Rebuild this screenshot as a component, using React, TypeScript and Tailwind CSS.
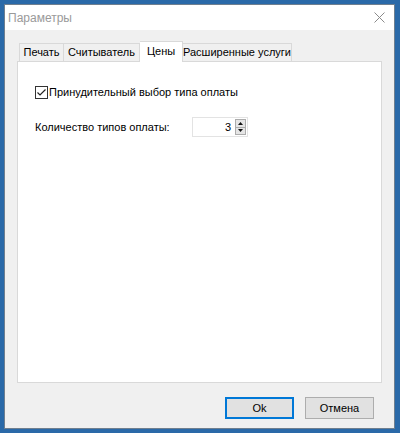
import React from "react";

const font = { fontFamily: '"Liberation Sans", Arial, sans-serif' };

export default function App() {
  return (
    <div className="w-[400px] h-[433px] bg-[#2a69a8] pt-[4px] pl-[4px] overflow-hidden" style={font}>
      <div className="w-[391px] h-[425px] border border-[#6f7f8f] flex flex-col bg-[#f0f0f0]">
        {/* Title bar */}
        <div className="h-[25px] bg-white flex items-center justify-between pl-[3px] pr-[9px] shrink-0">
          <span className="text-[12px] text-[#9a9a9a]">Параметры</span>
          <svg width="11" height="11" viewBox="0 0 11 11">
            <path d="M0.5 0.5 L10.5 10.5 M10.5 0.5 L0.5 10.5" stroke="#8a8a8a" strokeWidth="1" />
          </svg>
        </div>
        {/* Body */}
        <div className="flex-1 flex flex-col px-[12px] pt-[11px] pb-[8px] text-[11px] text-black">
          {/* Tabs */}
          <div className="h-[20px] flex items-end pl-[2px] relative z-10">
            <div className="w-[45px] h-[18px] border border-b-0 border-[#d9d9d9] bg-[#f0f0f0] flex items-center justify-center leading-none">Печать</div>
            <div className="w-[76px] h-[18px] border border-b-0 border-l-0 border-[#d9d9d9] bg-[#f0f0f0] flex items-center justify-center leading-none">Считыватель</div>
            <div className="w-[43px] h-[21px] border border-b-0 border-l-0 border-[#d9d9d9] bg-white flex items-start justify-center pt-[4px] leading-none mb-[-1px]">Цены</div>
            <div className="w-[109px] h-[18px] border border-b-0 border-l-0 border-[#d9d9d9] bg-[#f0f0f0] flex items-center justify-center leading-none">Расширенные услуги</div>
          </div>
          {/* Panel */}
          <div className="h-[322px] border border-[#d9d9d9] bg-white pl-[17px] pt-[24px] flex flex-col">
            <div className="flex items-center h-[13px]">
              <div className="w-[13px] h-[13px] border border-[#333333] bg-white flex items-center justify-center">
                <svg width="11" height="11" viewBox="0 0 11 11">
                  <path d="M1.5 5.5 L4 8 L9.5 2.5" stroke="#222" strokeWidth="1.2" fill="none" />
                </svg>
              </div>
              <span className="ml-[1px] leading-none">Принудительный выбор типа оплаты</span>
            </div>
            <div className="flex items-center mt-[18px] h-[20px]">
              <span className="w-[157px] leading-none">Количество типов оплаты:</span>
              <div className="w-[56px] h-[20px] border border-[#e3e3e3] bg-white flex items-center justify-end pr-[1px]">
                <span className="leading-none mr-[4px]">3</span>
                <div className="w-[11px] h-[16px] flex flex-col border border-[#acacac]">
                  <div className="flex-1 bg-[#e5e5e5] border-b border-[#acacac] flex items-center justify-center">
                    <svg width="5" height="3" viewBox="0 0 5 3"><path d="M0 3 L2.5 0 L5 3 Z" fill="#111" /></svg>
                  </div>
                  <div className="flex-1 bg-[#e5e5e5] flex items-center justify-center">
                    <svg width="5" height="3" viewBox="0 0 5 3"><path d="M0 0 L5 0 L2.5 3 Z" fill="#111" /></svg>
                  </div>
                </div>
              </div>
            </div>
          </div>
          {/* Buttons */}
          <div className="flex justify-end gap-[11px] mt-[14px] pr-[8px]">
            <button className="w-[69px] h-[22px] border-2 border-[#0078d7] bg-[#e1e1e1] flex items-center justify-center text-[11px] leading-none">Ok</button>
            <button className="w-[69px] h-[22px] border border-[#adadad] bg-[#e1e1e1] flex items-center justify-center text-[11px] leading-none">Отмена</button>
          </div>
        </div>
      </div>
    </div>
  );
}
